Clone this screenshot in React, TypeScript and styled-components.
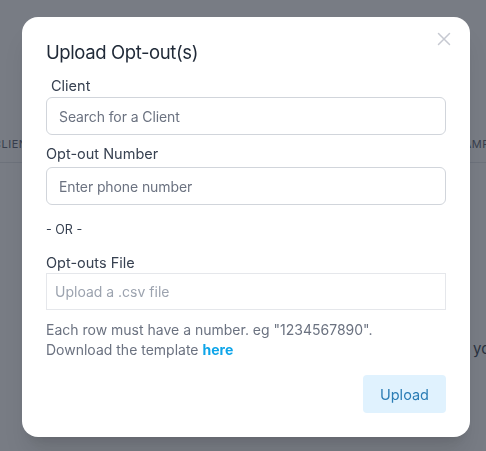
import React from 'react';
import styled, { createGlobalStyle } from 'styled-components';

const GlobalStyle = createGlobalStyle`
  html, body {
    margin: 0;
    padding: 0;
    width: 486px;
    height: 451px;
    overflow: hidden;
    background: #ffffff;
    font-family: Inter, "Noto Sans", "Liberation Sans", sans-serif;
  }
  * {
    box-sizing: border-box;
  }
`;

const Page = styled.div`
  width: 486px;
  height: 451px;
  padding-top: 125px;
  overflow: hidden;
`;

const HeaderRow = styled.div`
  display: flex;
  justify-content: space-between;
  align-items: center;
  height: 38px;
  border-bottom: 1px solid #e5e7eb;
  color: #6b7280;
  font-size: 11px;
  letter-spacing: 0.5px;
  text-transform: uppercase;
  white-space: nowrap;
`;

const HeadCell = styled.span<{ $shift: number }>`
  margin-left: ${(p) => p.$shift}px;
  margin-right: ${(p) => (p.$shift > 0 ? -32 : 0)}px;
`;

const EmptyText = styled.div`
  margin-top: 176px;
  margin-left: 473px;
  white-space: nowrap;
  color: #4b5563;
  font-size: 15px;
`;

const Overlay = styled.div`
  position: fixed;
  inset: 0;
  background: rgba(17, 24, 39, 0.57);
  display: flex;
  align-items: flex-start;
  padding: 17px 16px 0 22px;
`;

const Modal = styled.div`
  position: relative;
  width: 448px;
  background: #ffffff;
  border-radius: 16px;
  padding: 23px 24px 24px;
  box-shadow: 0 20px 25px -5px rgba(0, 0, 0, 0.1), 0 8px 10px -6px rgba(0, 0, 0, 0.1);
  display: flex;
  flex-direction: column;
`;

const CloseButton = styled.button`
  position: absolute;
  top: 10px;
  right: 14px;
  width: 24px;
  height: 24px;
  padding: 0;
  border: none;
  background: transparent;
  display: flex;
  align-items: center;
  justify-content: center;
  color: #c6c9d1;
  cursor: pointer;
`;

const Title = styled.h2`
  margin: 0 0 12px;
  font-size: 18.5px;
  line-height: 24px;
  letter-spacing: -0.4px;
  font-weight: 400;
  color: #1f2937;
`;

const Field = styled.div<{ $top?: number }>`
  display: flex;
  flex-direction: column;
  margin-top: ${(p) => p.$top ?? 0}px;
`;

const Label = styled.label<{ $indent?: boolean; $space?: number }>`
  font-size: 14.5px;
  line-height: 20px;
  color: #374151;
  padding-left: ${(p) => (p.$indent ? 5 : 0)}px;
  margin-bottom: ${(p) => p.$space ?? 1}px;
`;

const TextInput = styled.input`
  height: 38px;
  width: 100%;
  border: 1px solid #d1d5db;
  border-radius: 6px;
  padding: 0 12px;
  font-family: inherit;
  font-size: 14px;
  letter-spacing: -0.1px;
  color: #1f2937;
  outline: none;
  &::placeholder {
    color: #6b7280;
  }
`;

const Divider = styled.div`
  margin: 17px 0 15px;
  font-size: 12.5px;
  line-height: 16px;
  color: #374151;
`;

const FileBox = styled.div`
  height: 37px;
  border: 1px solid #e5e7eb;
  padding: 0 8px;
  display: flex;
  align-items: center;
  font-size: 14px;
  color: #9ca3af;
`;

const Helper = styled.p`
  margin: 10px 0 0;
  font-size: 14px;
  line-height: 19.5px;
  color: #6b7280;
`;

const Link = styled.a`
  color: #0ea5e9;
  font-weight: 700;
  text-decoration: none;
`;

const Footer = styled.div`
  display: flex;
  justify-content: flex-end;
  margin-top: 16px;
`;

const UploadButton = styled.button`
  height: 38px;
  padding: 0 17px;
  border: none;
  border-radius: 4px;
  background: #e0f2fe;
  color: #2b7db5;
  font-family: inherit;
  font-size: 14.5px;
  cursor: pointer;
`;

const CloseIcon = () => (
  <svg width="14" height="14" viewBox="0 0 14 14" fill="none" stroke="currentColor" strokeWidth="1.5" strokeLinecap="round">
    <path d="M1.5 1.5 L12.5 12.5 M12.5 1.5 L1.5 12.5" />
  </svg>
);

const App: React.FC = () => {
  return (
    <>
      <GlobalStyle />
      <Page>
        <HeaderRow>
          <HeadCell $shift={-7}>Client</HeadCell>
          <HeadCell $shift={1}>Campaign</HeadCell>
        </HeaderRow>
        <EmptyText>you have no opt-outs</EmptyText>
      </Page>
      <Overlay>
        <Modal>
          <CloseButton aria-label="Close">
            <CloseIcon />
          </CloseButton>
          <Title>Upload Opt-out(s)</Title>
          <Field>
            <Label $indent>Client</Label>
            <TextInput placeholder="Search for a Client" />
          </Field>
          <Field $top={9}>
            <Label $space={3}>Opt-out Number</Label>
            <TextInput placeholder="Enter phone number" />
          </Field>
          <Divider>- OR -</Divider>
          <Field>
            <Label $space={0}>Opt-outs File</Label>
            <FileBox>Upload a .csv file</FileBox>
          </Field>
          <Helper>
            Each row must have a number. eg "1234567890".
            <br />
            Download the template <Link href="#">here</Link>
          </Helper>
          <Footer>
            <UploadButton>Upload</UploadButton>
          </Footer>
        </Modal>
      </Overlay>
    </>
  );
};

export default App;
